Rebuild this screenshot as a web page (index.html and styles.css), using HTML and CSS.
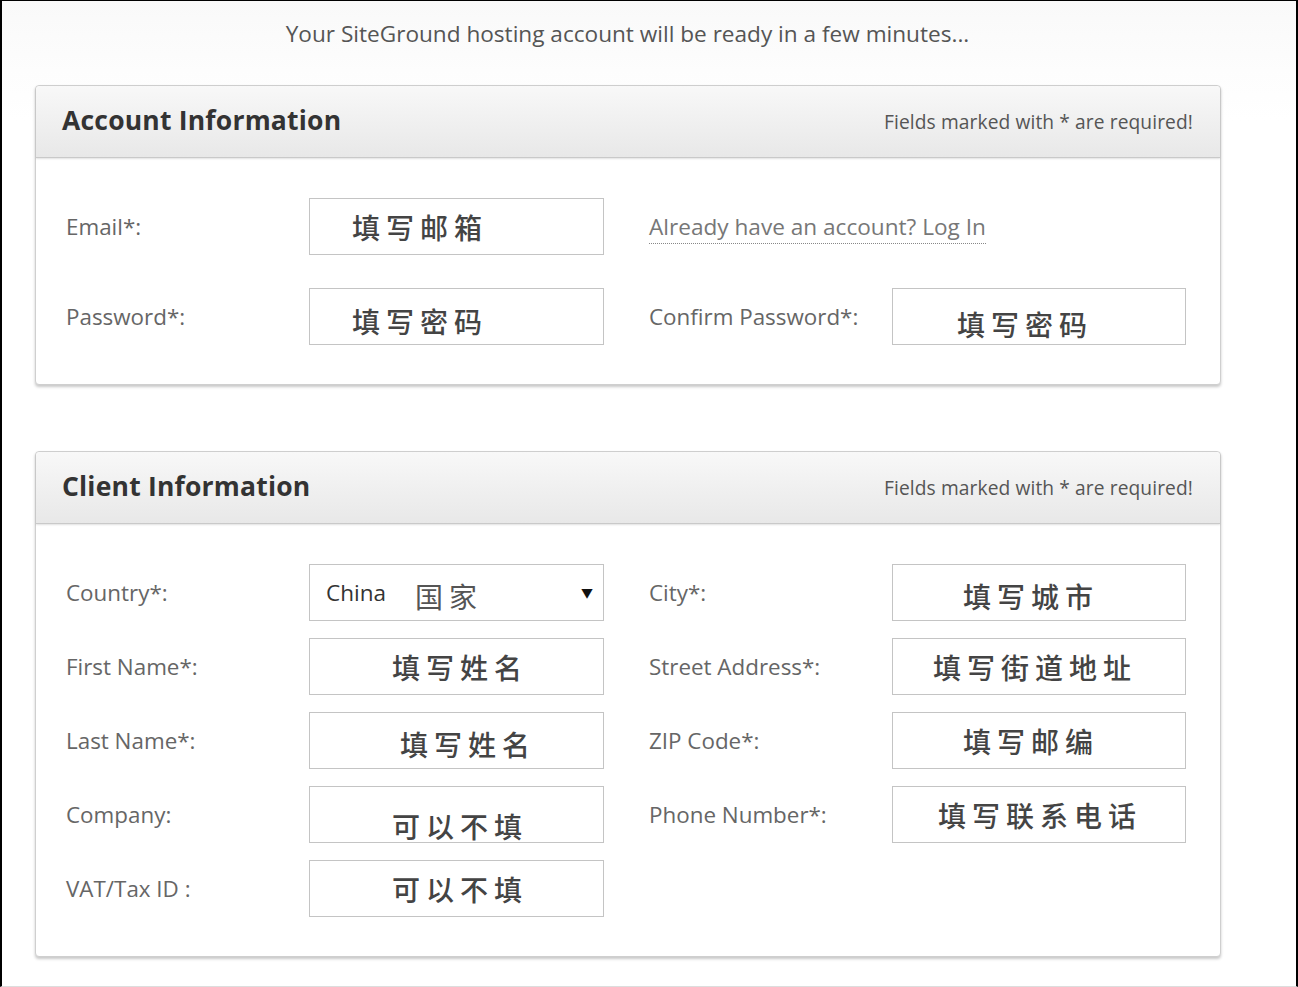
FILE: index.html
```html
<!DOCTYPE html>
<html lang="en">
<head>
<meta charset="utf-8">
<title>SiteGround signup</title>
<link rel="stylesheet" href="styles.css">
</head>
<body>
<div class="frame">
  <p class="notice">Your SiteGround hosting account will be ready in a few minutes...</p>

  <section class="panel">
    <header class="panel-head">
      <h2 class="panel-title">Account Information</h2>
      <span class="required-note">Fields marked with * are required!</span>
    </header>
    <div class="panel-body grid-account">
      <label class="lbl">Email*:</label>
      <div class="box"><span class="cjk off-43">填写邮箱</span></div>
      <div class="login-cell"><a class="login-link">Already have an account? Log In</a></div>
      <div></div>

      <label class="lbl">Password*:</label>
      <div class="box"><span class="cjk off-43 low-4">填写密码</span></div>
      <label class="lbl">Confirm Password*:</label>
      <div class="box"><span class="cjk off-65 low-7">填写密码</span></div>
    </div>
  </section>

  <section class="panel panel-client">
    <header class="panel-head">
      <h2 class="panel-title">Client Information</h2>
      <span class="required-note">Fields marked with * are required!</span>
    </header>
    <div class="panel-body grid-client">
      <label class="lbl">Country*:</label>
      <div class="box select">
        <span class="latin">China</span><span class="cjk cjk-country">国家</span>
        <span class="arrow">▼</span>
      </div>
      <label class="lbl">City*:</label>
      <div class="box"><span class="cjk off-71 low-3">填写城市</span></div>

      <label class="lbl">First Name*:</label>
      <div class="box"><span class="cjk off-83">填写姓名</span></div>
      <label class="lbl">Street Address*:</label>
      <div class="box"><span class="cjk off-41">填写街道地址</span></div>

      <label class="lbl">Last Name*:</label>
      <div class="box"><span class="cjk off-91 low-3">填写姓名</span></div>
      <label class="lbl">ZIP Code*:</label>
      <div class="box"><span class="cjk off-71">填写邮编</span></div>

      <label class="lbl">Company:</label>
      <div class="box"><span class="cjk off-83 low-11">可以不填</span></div>
      <label class="lbl">Phone Number*:</label>
      <div class="box"><span class="cjk off-46">填写联系电话</span></div>

      <label class="lbl">VAT/Tax ID :</label>
      <div class="box"><span class="cjk off-83">可以不填</span></div>
      <div></div>
      <div></div>
    </div>
  </section>
</div>
</body>
</html>
```

FILE: styles.css
```css
* { box-sizing: border-box; }

html, body {
  margin: 0;
  padding: 0;
  background: #ffffff;
}

body {
  font-family: "Open Sans", "Noto Sans CJK SC", sans-serif;
  color: #666;
}

.frame {
  width: 1298px;
  height: 987px;
  border-left: 2px solid #000;
  border-top: 1px solid #000;
  border-right: 2px solid #000;
  border-bottom: 1px solid #ddd;
  background: linear-gradient(#f9f9f9 0, #fdfdfd 70px, #ffffff 120px);
  padding: 0 76px 0 33px;
  overflow: hidden;
}

.notice {
  margin: 0;
  height: 84px;
  padding-top: 18px;
  text-align: center;
  font-size: 22.6px;
  line-height: 30px;
  color: #555;
  padding-left: 0;
  padding-right: 0;
}

.panel {
  width: 1186px;
  border: 1px solid #cfcfcf;
  border-radius: 4px;
  background: #fff;
  box-shadow: 0 2px 3px rgba(0, 0, 0, 0.22);
}

.panel-client {
  margin-top: 66px;
}

.panel-head {
  height: 72px;
  display: flex;
  align-items: center;
  justify-content: space-between;
  padding: 0 27px 0 26px;
  background: linear-gradient(#f8f8f8, #e8e8e8);
  border-bottom: 1px solid #c9c9c9;
  border-radius: 4px 4px 0 0;
  box-shadow: 0 1px 2px rgba(0, 0, 0, 0.12);
}

.panel-title {
  margin: 0;
  font-size: 26.5px;
  font-weight: 700;
  color: #333;
  letter-spacing: 0.2px;
  padding-bottom: 4px;
}

.required-note {
  font-size: 19.2px;
  color: #555;
  letter-spacing: 0.1px;
}

.panel-body {
  display: grid;
  grid-template-columns: 198px 295px 198px 294px;
  column-gap: 45px;
  padding-left: 30px;
  align-items: center;
}

.grid-account {
  row-gap: 33px;
  padding-top: 40px;
  padding-bottom: 39px;
}

.grid-client {
  row-gap: 17px;
  padding-top: 40px;
  padding-bottom: 39px;
}

.lbl {
  font-size: 22.4px;
  color: #666;
  white-space: nowrap;
}

.box {
  height: 57px;
  border: 1px solid #c4c4c4;
  background: #fff;
  display: flex;
  align-items: center;
  position: relative;
}

.cjk {
  font-family: "Noto Sans CJK SC", sans-serif;
  font-size: 28px;
  font-weight: 500;
  letter-spacing: 6px;
  color: #444;
  line-height: 1;
}

.off-41 { padding-left: 40px; }
.off-43 { padding-left: 42px; }
.off-46 { padding-left: 45px; }
.off-65 { padding-left: 64px; }
.off-71 { padding-left: 70px; }
.off-83 { padding-left: 82px; }
.off-91 { padding-left: 90px; }

.low-3 { padding-top: 6px; }
.low-4 { padding-top: 8px; }
.low-7 { padding-top: 14px; }
.low-11 { padding-top: 22px; }

.select .latin {
  font-size: 22.5px;
  color: #333;
  padding-left: 16px;
}

.cjk-country {
  padding-left: 29px;
  color: #555;
  font-weight: 400;
  padding-top: 6px;
}

.arrow {
  position: absolute;
  right: 10px;
  top: 19px;
  font-size: 12px;
  color: #111;
}

.login-cell {
  white-space: nowrap;
}

.login-link {
  font-size: 22.6px;
  color: #777;
  text-decoration: none;
  border-bottom: 1px dotted #888;
  padding-bottom: 1px;
}
```
